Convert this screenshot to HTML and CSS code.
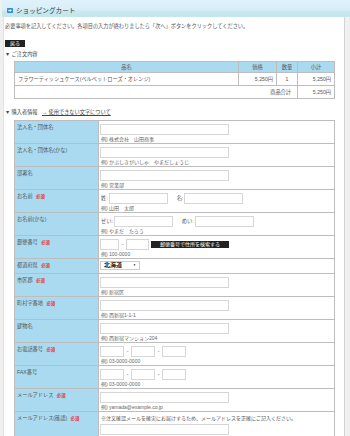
FILE: index.html
```html
<!DOCTYPE html>
<html lang="ja">
<head>
    <meta charset="UTF-8">
    <meta name="viewport" content="width=device-width, initial-scale=1.0">
    <title>ショッピングカート</title>
    <link rel="stylesheet" href="styles.css">
</head>
<body>
    <div class="page-title">
        <span class="title-icon">
            <svg width="6" height="5" viewBox="0 0 6 5"><rect width="6" height="5" rx="0.8" fill="#2f8fd8"/><path d="M1.2 2.5h3M3 1.3L4.2 2.5 3 3.7" stroke="#fff" stroke-width="0.9" fill="none"/></svg>
        </span>
        <h1>ショッピングカート</h1>
    </div>

    <div class="cart-container">
        <p class="lead">必要事項を記入してください。各項目の入力が終わりましたら「次へ」ボタンをクリックしてください。</p>
        <button class="btn back">戻る</button>

        <h2 class="section-title">▼ ご注文内容</h2>
        <table class="order-table">
            <tr>
                <th class="col-name">品名</th>
                <th class="col-price">価格</th>
                <th class="col-qty">数量</th>
                <th class="col-sub">小計</th>
            </tr>
            <tr>
                <td>フラワーティッシュケース(ベルベットローズ・オレンジ)</td>
                <td class="num">5,250円</td>
                <td class="qty">1</td>
                <td class="num">5,250円</td>
            </tr>
            <tr>
                <td class="total-label" colspan="3">商品合計</td>
                <td class="num">5,250円</td>
            </tr>
        </table>

        <h2 class="section-title buyer">▼ 購入者情報 <a href="#" class="notice-link">→ 使用できない文字について</a></h2>
        <table class="form-table">
            <tr>
                <th>法人名・団体名</th>
                <td><input type="text" class="field"><p class="example">例) 株式会社　山田商事</p></td>
            </tr>
            <tr>
                <th>法人名・団体名(かな)</th>
                <td><input type="text" class="field"><p class="example">例) かぶしきがいしゃ　やまだしょうじ</p></td>
            </tr>
            <tr>
                <th>部署名</th>
                <td><input type="text" class="field"><p class="example">例) 営業部</p></td>
            </tr>
            <tr>
                <th>お名前 <span class="required">必須</span></th>
                <td>
                    <div class="field-row">
                        <span>姓:</span><input type="text" class="field half">
                        <span class="second">名:</span><input type="text" class="field half">
                    </div>
                    <p class="example">例) 山田　太郎</p>
                </td>
            </tr>
            <tr>
                <th>お名前(かな)</th>
                <td>
                    <div class="field-row">
                        <span>せい:</span><input type="text" class="field half">
                        <span class="second">めい:</span><input type="text" class="field half">
                    </div>
                    <p class="example">例) やまだ　たろう</p>
                </td>
            </tr>
            <tr>
                <th>郵便番号 <span class="required">必須</span></th>
                <td>
                    <div class="field-row">
                        <input type="text" class="field zip1"><span class="dash">-</span><input type="text" class="field zip2">
                        <button class="btn search">郵便番号で住所を検索する</button>
                    </div>
                    <p class="example">例) 100-0000</p>
                </td>
            </tr>
            <tr class="short">
                <th>都道府県 <span class="required">必須</span></th>
                <td>
                    <div class="select-box">北海道 <span class="arrow">▼</span></div>
                </td>
            </tr>
            <tr>
                <th>市区郡 <span class="required">必須</span></th>
                <td><input type="text" class="field"><p class="example">例) 新宿区</p></td>
            </tr>
            <tr>
                <th>町村字番地 <span class="required">必須</span></th>
                <td><input type="text" class="field"><p class="example">例) 西新宿1-1-1</p></td>
            </tr>
            <tr>
                <th>建物名</th>
                <td><input type="text" class="field"><p class="example">例) 西新宿マンション204</p></td>
            </tr>
            <tr>
                <th>お電話番号 <span class="required">必須</span></th>
                <td>
                    <div class="field-row">
                        <input type="text" class="field tel"><span class="dash">-</span><input type="text" class="field tel"><span class="dash">-</span><input type="text" class="field tel">
                    </div>
                    <p class="example">例) 03-0000-0000</p>
                </td>
            </tr>
            <tr>
                <th>FAX番号</th>
                <td>
                    <div class="field-row">
                        <input type="text" class="field tel"><span class="dash">-</span><input type="text" class="field tel"><span class="dash">-</span><input type="text" class="field tel">
                    </div>
                    <p class="example">例) 03-0000-0000</p>
                </td>
            </tr>
            <tr>
                <th>メールアドレス <span class="required">必須</span></th>
                <td><input type="text" class="field"><p class="example">例) yamada@example.co.jp</p></td>
            </tr>
            <tr>
                <th>メールアドレス(確認) <span class="required">必須</span></th>
                <td><p class="note">※注文確認メールを確実にお届けするため、メールアドレスを正確にご記入ください。</p><input type="text" class="field"></td>
            </tr>
        </table>
    </div>
</body>
</html>
```

FILE: styles.css
```css
* {
    margin: 0;
    padding: 0;
    box-sizing: border-box;
}

body {
    font-family: "Liberation Sans", "Noto Sans CJK JP", sans-serif;
    font-size: 5.2px;
    line-height: 7px;
    color: #555;
    background: #f0f0f0;
    overflow: hidden;
}

.page-title {
    height: 17px;
    display: flex;
    align-items: center;
    gap: 3px;
    padding: 3px 0 0 5px;
    margin-left: 2px;
    background: linear-gradient(#e0f2fb, #d6eef9 60%, #c6e8ee 64%, #c3e7ec);
}

.title-icon {
    display: flex;
}

.page-title h1 {
    font-size: 6.6px;
    font-weight: normal;
    color: #333;
}

.cart-container {
    margin: 0 5px 0 3px;
    padding: 6px 0 20px 1px;
    background: #fff;
    border-left: 1px solid #e2e2e2;
    border-right: 1px solid #d4d4d4;
}

.lead {
    color: #555;
}

.btn {
    font-family: inherit;
    border: none;
    cursor: pointer;
    background: #222;
    color: #fff;
}

.btn.back {
    display: block;
    margin-top: 10px;
    height: 7px;
    padding: 0 5px;
    font-size: 5px;
    line-height: 7px;
}

.section-title {
    font-size: 5.2px;
    font-weight: normal;
    color: #444;
    margin-top: 4px;
}

.section-title.buyer {
    margin-top: 10px;
}

.notice-link {
    color: #444;
    margin-left: 3px;
}

/* order summary */
.order-table {
    width: 321px;
    margin: 3px 0 0 9px;
    border-collapse: collapse;
}

.order-table th,
.order-table td {
    border: 1px solid #bdbdbd;
    font-weight: normal;
    padding: 0 3px;
}

.order-table th {
    background: #a9daf0;
    height: 11px;
    text-align: center;
}

.order-table td {
    height: 13px;
}

.col-price { width: 38px; }
.col-qty { width: 21px; }
.col-sub { width: 37px; }

.order-table .num {
    text-align: right;
}

.order-table .qty {
    text-align: center;
}

.order-table .total-label {
    text-align: right;
    padding-right: 6px;
}

/* customer form */
.form-table {
    width: 321px;
    margin: 4px 0 0 9px;
    border-collapse: collapse;
}

.form-table th,
.form-table td {
    border: 1px solid #bdbdbd;
    vertical-align: top;
}

.form-table th {
    width: 84px;
    background: #a9daf0;
    font-weight: normal;
    text-align: left;
    padding: 3px 2px 0;
    color: #555;
}

.form-table td {
    padding: 3px 1px 1px;
    height: 23px;
}

.form-table tr.short td {
    height: 15px;
    padding-top: 2px;
}

.required {
    color: #e23b3b;
    font-size: 4.4px;
    font-weight: bold;
    margin-left: 2px;
}

.field {
    display: block;
    width: 129px;
    height: 11px;
    border: 1px solid #d6d6d6;
    background: #fff;
}

.field-row {
    display: flex;
    align-items: center;
}

.field-row .field {
    display: inline-block;
}

.field-row span {
    padding: 0 1px;
}

.field-row .second {
    margin-left: 8px;
}

.field.half {
    width: 59px;
}

.field.zip1 {
    width: 19px;
}

.field.zip2 {
    width: 23px;
}

.field.tel {
    width: 24px;
}

.dash {
    width: 7px;
    text-align: center;
}

.btn.search {
    margin-left: 2px;
    height: 7px;
    width: 78px;
    font-size: 5px;
    line-height: 7px;
}

.example {
    font-size: 5px;
    line-height: 6px;
    margin: 1px 0 0 1px;
    color: #666;
}

.note {
    font-size: 5px;
    margin: 0 0 2px 1px;
}

.select-box {
    display: flex;
    justify-content: space-between;
    align-items: center;
    width: 40px;
    height: 9px;
    padding: 0 3px;
    border: 1px solid #ccc;
    font-size: 6px;
    font-weight: bold;
    color: #222;
}

.select-box .arrow {
    font-size: 3px;
}
```
